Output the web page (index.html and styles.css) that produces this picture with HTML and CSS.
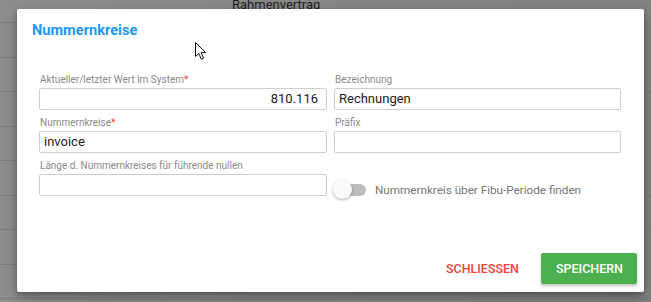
FILE: index.html
```html
<!DOCTYPE html>
<html lang="de">
<head>
<meta charset="utf-8">
<title>Nummernkreise</title>
<link rel="stylesheet" href="styles.css">
</head>
<body>
<div class="backdrop">
  <div class="bg-row bg-head"><span class="bg-text">Rahmenvertrag</span></div>
  <div class="bg-row"></div>
  <div class="bg-row"></div>
  <div class="bg-row"></div>
  <div class="bg-row"></div>
  <div class="bg-row"></div>
  <div class="bg-row"></div>
  <div class="bg-row"></div>
  <div class="bg-row"></div>
</div>

<div class="dialog">
  <h2 class="dialog-title">Nummernkreise</h2>
  <div class="form">
    <div class="field">
      <label class="label">Aktueller/letzter Wert im System<span class="req">*</span></label>
      <div class="input align-right">810.116</div>
    </div>
    <div class="field">
      <label class="label">Bezeichnung</label>
      <div class="input">Rechnungen</div>
    </div>
    <div class="field">
      <label class="label">Nummernkreise<span class="req">*</span></label>
      <div class="input">invoice</div>
    </div>
    <div class="field">
      <label class="label">Präfix</label>
      <div class="input"></div>
    </div>
    <div class="field">
      <label class="label">Länge d. Nummernkreises für führende nullen</label>
      <div class="input"></div>
    </div>
    <div class="field toggle-field">
      <div class="toggle"><span class="track"></span><span class="knob"></span></div>
      <span class="toggle-label">Nummernkreis über Fibu-Periode finden</span>
    </div>
  </div>
  <div class="actions">
    <button class="btn btn-flat">SCHLIESSEN</button>
    <button class="btn btn-primary">SPEICHERN</button>
  </div>
</div>

<svg class="cursor" width="14" height="20" viewBox="0 0 14 20" aria-hidden="true">
  <path d="M1.5 1.5 L1.5 15.5 L4.8 12.4 L7.3 18.2 L9.6 17.2 L7.1 11.6 L11.6 11.6 Z" fill="#fff" stroke="#111" stroke-width="1" stroke-linejoin="round"/>
</svg>
</body>
</html>
```

FILE: styles.css
```css
* { box-sizing: border-box; }

html, body {
  margin: 0;
  padding: 0;
  width: 651px;
  height: 302px;
  overflow: hidden;
}

body {
  font-family: Roboto, "Liberation Sans", Arial, sans-serif;
  background: linear-gradient(to right, #8d8d8d 0%, #878787 40%, #828282 100%);
  position: relative;
}

.backdrop {
  display: flex;
  flex-direction: column;
}

.bg-row {
  height: 34.5px;
  border-bottom: 1px solid #7b7b7b;
  flex: none;
}

.bg-head {
  height: 23px;
  position: relative;
}

.bg-text {
  position: absolute;
  left: 232px;
  top: -2px;
  font-size: 13px;
  line-height: 14px;
  color: #1e1e1e;
}

.dialog {
  position: absolute;
  left: 17px;
  top: 9px;
  width: 627px;
  height: 283px;
  background: #fff;
  border-radius: 2px;
  box-shadow: 0 6px 14px rgba(0,0,0,0.28), 0 2px 4px rgba(0,0,0,0.2);
  display: flex;
  flex-direction: column;
  padding: 12px 23px 8px 22px;
}

.dialog-title {
  margin: 0 0 0 -7px;
  font-size: 14.6px;
  line-height: 18px;
  font-weight: 700;
  color: #2196f3;
}

.form {
  margin-top: 35px;
  display: grid;
  grid-template-columns: 288px 287px;
  column-gap: 7px;
  row-gap: 7px;
}

.field {
  display: flex;
  flex-direction: column;
}

.label {
  font-size: 10px;
  line-height: 12px;
  color: #8a8a8a;
  margin-bottom: 2px;
  padding-left: 1px;
}

.req { color: #f44336; }

.input {
  height: 22px;
  border: 1px solid #cfcfcf;
  border-radius: 2px;
  font-size: 13px;
  line-height: 20px;
  color: #222;
  padding: 0 8px 0 4px;
}

.align-right { text-align: right; }

.toggle-field {
  flex-direction: row;
  align-items: center;
  align-self: end;
  height: 24px;
  margin-bottom: -6px;
  margin-left: -1px;
}

.toggle {
  position: relative;
  width: 34px;
  height: 22px;
  flex: none;
}

.track {
  position: absolute;
  left: 6px;
  top: 5px;
  width: 27px;
  height: 12px;
  border-radius: 6px;
  background: #bdbdbd;
}

.knob {
  position: absolute;
  left: 0;
  top: 1px;
  width: 19px;
  height: 19px;
  border-radius: 50%;
  background: #fafafa;
  box-shadow: 0 1px 3px rgba(0,0,0,0.35);
}

.toggle-label {
  margin-left: 8px;
  font-size: 11.7px;
  color: #757575;
}

.actions {
  margin-top: auto;
  display: flex;
  justify-content: flex-end;
  align-items: center;
  gap: 6px;
  margin-right: -16px;
}

.btn {
  font-family: Roboto, "Liberation Sans", Arial, sans-serif;
  font-size: 12.5px;
  font-weight: 500;
  border: none;
  border-radius: 2px;
  height: 31px;
  cursor: pointer;
}

.btn-flat {
  background: transparent;
  color: #f44336;
  padding: 0 16px;
}

.btn-primary {
  background: #4caf50;
  color: #fff;
  padding: 0 15px;
  width: 96px;
  box-shadow: 0 2px 3px rgba(0,0,0,0.25);
}

.cursor {
  position: absolute;
  left: 194px;
  top: 41px;
}
```
